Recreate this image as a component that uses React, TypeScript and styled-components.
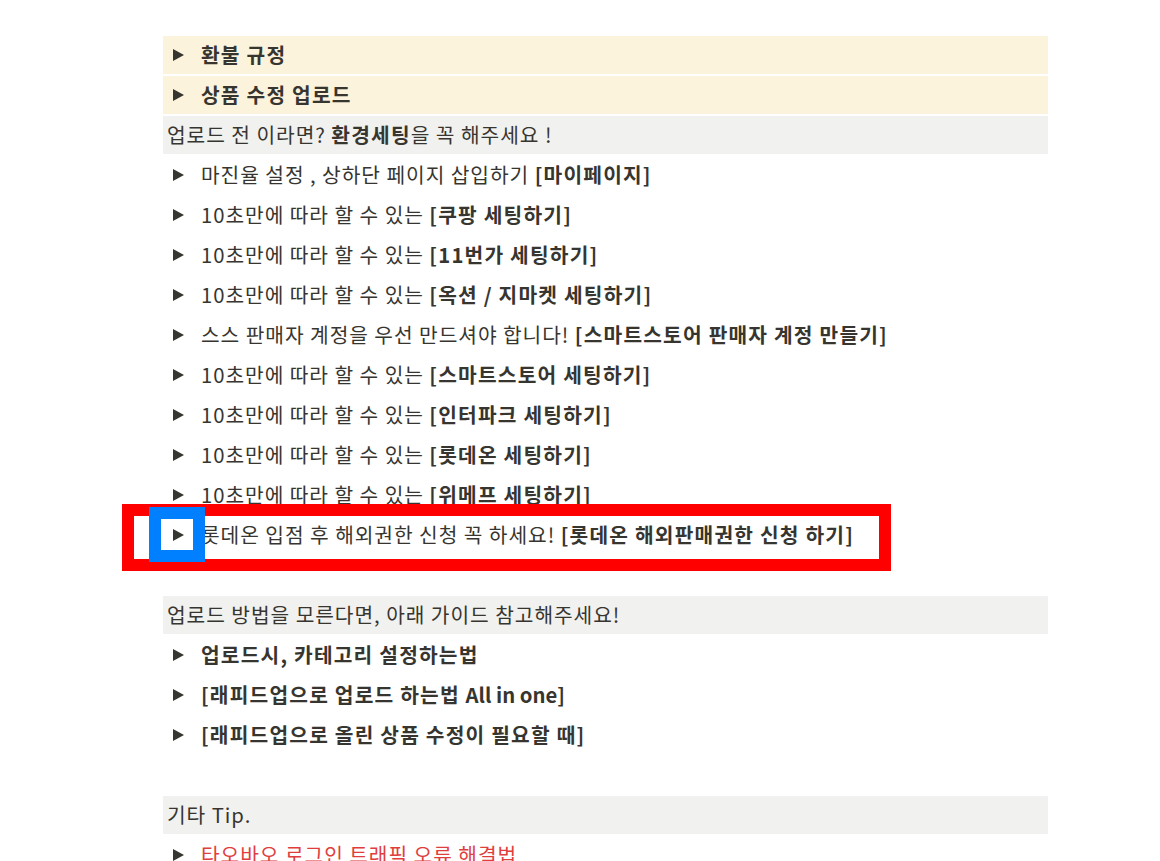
import React from "react";
import styled, { createGlobalStyle } from "styled-components";

const GlobalStyle = createGlobalStyle`
  html, body { margin: 0; padding: 0; background: #ffffff; }
  body {
    font-family: "Noto Sans CJK KR", "Noto Sans", sans-serif;
    color: #37352f;
    overflow: hidden;
  }
`;

const Page = styled.div`
  width: 1160px;
  height: 861px;
  overflow: hidden;
  padding-top: 36px;
  box-sizing: border-box;
`;

const Column = styled.div`
  margin-left: 163px;
  width: 885px;
  display: flex;
  flex-direction: column;
  gap: 2px;
`;

const Block = styled.div<{ $bg?: "yellow" | "gray" }>`
  position: relative;
  height: 38px;
  padding-bottom: 1px;
  display: flex;
  align-items: center;
  box-sizing: border-box;
  font-size: 20.3px;
  letter-spacing: 0.95px;
  line-height: 1;
  white-space: nowrap;
  background: ${(p) =>
    p.$bg === "yellow" ? "#fbf3db" : p.$bg === "gray" ? "#f1f1ef" : "transparent"};
`;

const Toggle = styled(Block)`
  padding-left: 10px;
  gap: 17px;
`;

const Heading = styled(Block)`
  padding-left: 4px;
`;

const Arrow = styled.span`
  display: inline-block;
  width: 0;
  height: 0;
  flex: none;
  margin-top: 1px;
  border-top: 6px solid transparent;
  border-bottom: 6px solid transparent;
  border-left: 11px solid #37352f;
`;

const Text = styled.span<{ $red?: boolean; $bold?: boolean }>`
  color: ${(p) => (p.$red ? "#e03e3e" : "#37352f")};
  font-weight: ${(p) => (p.$bold ? 700 : 400)};
  letter-spacing: ${(p) => (p.$bold ? "1.2px" : "inherit")};
`;

const B = styled.b`
  font-weight: 700;
  letter-spacing: 1.2px;
`;

const Latin = styled.span`
  letter-spacing: 0;
`;

const RedFrame = styled.div`
  position: absolute;
  left: -41px;
  top: -12px;
  width: 769px;
  height: 67px;
  border: 12px solid #ff0000;
  box-sizing: border-box;
  pointer-events: none;
`;

const BlueFrame = styled.div`
  position: absolute;
  left: -14px;
  top: -9px;
  width: 56px;
  height: 55px;
  border: 12px solid #0080ff;
  box-sizing: border-box;
  pointer-events: none;
`;

const Empty = styled.div`
  height: 38px;
`;

type Row = { pre: string; bold: string };

const settingRows: Row[] = [
  { pre: "마진율 설정 , 상하단 페이지 삽입하기 ", bold: "[마이페이지]" },
  { pre: "10초만에 따라 할 수 있는 ", bold: "[쿠팡 세팅하기]" },
  { pre: "10초만에 따라 할 수 있는 ", bold: "[11번가 세팅하기]" },
  { pre: "10초만에 따라 할 수 있는 ", bold: "[옥션 / 지마켓 세팅하기]" },
  { pre: "스스 판매자 계정을 우선 만드셔야 합니다! ", bold: "[스마트스토어 판매자 계정 만들기]" },
  { pre: "10초만에 따라 할 수 있는 ", bold: "[스마트스토어 세팅하기]" },
  { pre: "10초만에 따라 할 수 있는 ", bold: "[인터파크 세팅하기]" },
  { pre: "10초만에 따라 할 수 있는 ", bold: "[롯데온 세팅하기]" },
  { pre: "10초만에 따라 할 수 있는 ", bold: "[위메프 세팅하기]" },
];

export default function App() {
  return (
    <>
      <GlobalStyle />
      <Page>
        <Column>
          <Toggle $bg="yellow">
            <Arrow />
            <Text $bold>환불 규정</Text>
          </Toggle>
          <Toggle $bg="yellow">
            <Arrow />
            <Text $bold>상품 수정 업로드</Text>
          </Toggle>
          <Heading $bg="gray">
            <Text>
              업로드 전 이라면? <B>환경세팅</B>을 꼭 해주세요 !
            </Text>
          </Heading>
          {settingRows.map((r, i) => (
            <Toggle key={i}>
              <Arrow />
              <Text>
                {r.pre}
                <B>{r.bold}</B>
              </Text>
            </Toggle>
          ))}
          <Toggle>
            <Arrow />
            <Text>
              롯데온 입점 후 해외권한 신청 꼭 하세요! <B>[롯데온 해외판매권한 신청 하기]</B>
            </Text>
            <RedFrame />
            <BlueFrame />
          </Toggle>
          <Empty />
          <Heading $bg="gray">
            <Text>업로드 방법을 모른다면, 아래 가이드 참고해주세요!</Text>
          </Heading>
          <Toggle>
            <Arrow />
            <Text $bold>업로드시, 카테고리 설정하는법</Text>
          </Toggle>
          <Toggle>
            <Arrow />
            <Text $bold>
              [래피드업으로 업로드 하는법 <Latin>All in one]</Latin>
            </Text>
          </Toggle>
          <Toggle>
            <Arrow />
            <Text $bold>[래피드업으로 올린 상품 수정이 필요할 때]</Text>
          </Toggle>
          <Empty />
          <Heading $bg="gray">
            <Text>기타 Tip.</Text>
          </Heading>
          <Toggle>
            <Arrow />
            <Text $red>타오바오 로그인 트래픽 오류 해결법</Text>
          </Toggle>
        </Column>
      </Page>
    </>
  );
}
